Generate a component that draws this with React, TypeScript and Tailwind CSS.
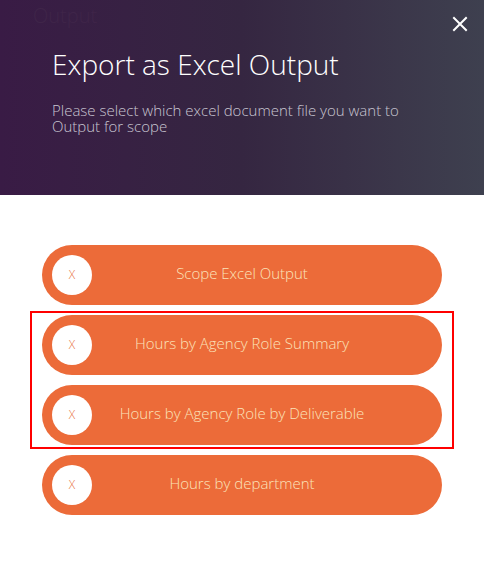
import React from "react";

const font = { fontFamily: '"Open Sans", "Noto Sans", sans-serif' };

function Option({ label }: { label: string }) {
  return (
    <button
      type="button"
      className="relative flex h-[60px] w-full items-center justify-center rounded-full bg-[#ec6b39] text-[15px] font-light text-[#fbe3b9]"
    >
      <span className="absolute left-[10px] top-[10px] flex h-10 w-10 items-center justify-center rounded-full bg-white text-[12px] font-light text-[#e8733a]">
        X
      </span>
      <span className="pb-[4px]">{label}</span>
    </button>
  );
}

export default function App() {
  return (
    <div className="h-[568px] w-[484px] bg-white" style={font}>
      <div className="relative h-[195px] bg-gradient-to-r from-[#391b45] via-[#352641] to-[#3e404f] px-[52px]">
        <div className="absolute left-[33px] top-[1px] text-[20px] font-light text-[#3f2549]">Output</div>
        <button type="button" className="absolute right-[16px] top-[16px] text-white" aria-label="Close">
          <svg width="16" height="16" viewBox="0 0 16 16" fill="none" stroke="white" strokeWidth="2" strokeLinecap="square">
            <path d="M2 2 L14 14 M14 2 L2 14" />
          </svg>
        </button>
        <h1 className="pt-[46px] text-[28px] font-light leading-[36px] text-white">Export as Excel Output</h1>
        <p className="mt-[20px] text-[15px] font-light leading-[16px] text-[#c9c6d2]">
          Please select which excel document file you want to
          <br />
          Output for scope
        </p>
      </div>
      <div className="flex flex-col gap-[10px] px-[42px] pt-[50px]">
        <Option label="Scope Excel Output" />
        <div className="-mx-3 -my-1 flex flex-col gap-[10px] border-2 border-[#ff0000] px-[10px] py-[2px]">
          <Option label="Hours by Agency Role Summary" />
          <Option label="Hours by Agency Role by Deliverable" />
        </div>
        <Option label="Hours by department" />
      </div>
    </div>
  );
}
